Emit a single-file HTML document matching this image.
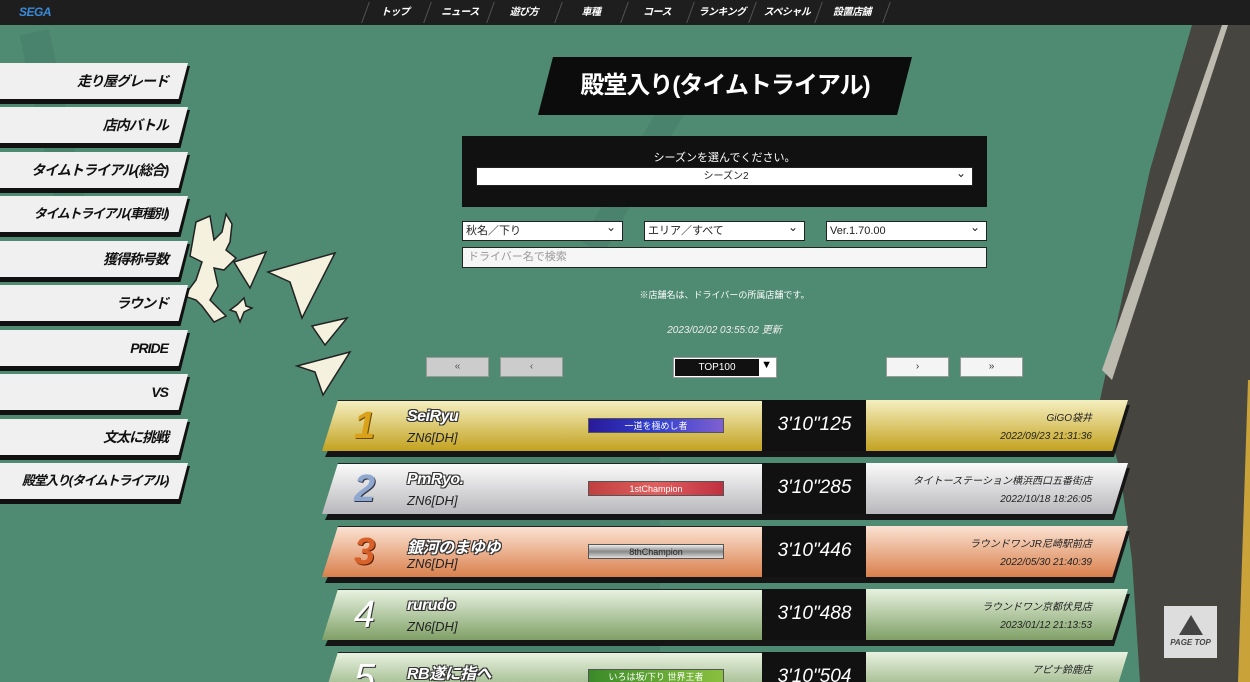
<!DOCTYPE html>
<html style="width:1250px;height:682px;overflow:hidden"><head><meta charset="utf-8">
<style>
*{margin:0;padding:0;box-sizing:border-box}
body{width:1250px;height:682px;overflow:hidden;background:#4f8a73;font-family:"Liberation Sans","Noto Sans CJK JP",sans-serif;position:relative}
.abs{position:absolute}
#nav{left:0;top:0;width:1250px;height:25px;background:#1e1e1e}
.ni{position:absolute;top:0;height:25px;line-height:25px;color:#fff;font-size:10px;font-weight:bold;font-style:italic;text-align:center;letter-spacing:-0.5px}
.sep{position:absolute;top:2px;width:1px;height:21px;background:#555;transform:skewX(-20deg)}
.sb{position:absolute;left:0;width:190px;height:40px}
.sb .sh{position:absolute;left:0;top:3px;width:190px;height:38px;background:#111;clip-path:polygon(0 0,100% 0,95% 100%,0 100%)}
.sb .fc{position:absolute;left:0;top:0;width:188px;height:36px;background:#f0f0f0;clip-path:polygon(0 0,100% 0,95% 100%,0 100%);text-align:right;padding-right:20px;line-height:36px;font-size:14px;font-weight:bold;font-style:italic;color:#111;letter-spacing:-1px;white-space:nowrap}
.sel{position:absolute;height:20px;background:#fff;border:1px solid #222;font-size:11px;line-height:18px;padding-left:3px;color:#222}
.sel:after{content:"⌄";position:absolute;right:6px;top:-4px;font-size:12px}
.btn{position:absolute;top:357px;width:63px;height:20px;border:1px solid #999;font-size:10px;text-align:center;line-height:18px;color:#555}
.row{position:absolute;left:320px;width:810px;height:52px}
.row .shd{position:absolute;left:5px;top:5px;width:805px;height:52px;background:#151515;clip-path:polygon(3% 0,100% 0,98% 100%,0 100%)}
.row .l{position:absolute;left:2px;top:0;width:441px;height:51px;clip-path:polygon(16px 0,100% 0,100% 100%,0 100%);border-top:1px solid #222}
.row .m{position:absolute;left:442px;top:0;width:105px;height:51px;background:#111;color:#fff;font-size:19px;font-style:italic;text-align:center;line-height:50px}
.row .r{position:absolute;left:546px;top:0;width:262px;height:51px;clip-path:polygon(0 0,100% 0,94% 100%,0 100%);text-align:right;padding-right:36px;font-size:10px;font-style:italic;color:#222;padding-top:10px;line-height:18px}
.rk{position:absolute;left:32px;top:3px;font-size:38px;font-weight:bold;font-style:italic;line-height:44px}
.nm{position:absolute;left:85px;top:7px;font-size:16px;font-weight:bold;font-style:italic;color:#fff;letter-spacing:-0.5px;text-shadow:1px 1px 0 #333,-1px -1px 0 #333,1px -1px 0 #333,-1px 1px 0 #333}
.car{position:absolute;left:85px;top:29px;font-size:13px;font-style:italic;color:#222}
.bd{position:absolute;left:266px;top:17px;width:136px;height:15px;font-size:9px;color:#fff;text-align:center;line-height:15px;border:1px solid #555}
</style></head><body>
<svg class="abs" style="left:0;top:0" width="1250" height="682">
<rect x="0" y="25" width="1250" height="657" fill="#4f8a73"/>
<g fill="#467d69" opacity=".6">
<rect x="40" y="30" width="30" height="200" transform="rotate(-12 55 130)"/>
<rect x="630" y="60" width="25" height="200" transform="rotate(30 640 160)"/>
<rect x="360" y="430" width="300" height="250"/>
</g>
<path d="M1192 25 L1250 25 L1250 682 L1140 682 L1132 560 L1120 470 L1100 400 L1150 170 Z" fill="#46453f"/>
<path d="M1222 25 L1228 25 L1112 380 L1102 370 Z" fill="#bdbbb0"/>
<path d="M1248 380 L1250 380 L1250 682 L1238 682 Z" fill="#c9a33a"/>
<g fill="#f4f2de" stroke="#222" stroke-width="1.5">
<path d="M196 222 L210 216 L214 240 L222 232 L226 214 L232 224 L230 242 L226 250 L236 258 L224 270 L214 268 L218 286 L210 300 L226 316 L214 322 L202 306 L196 300 L184 296 L196 280 L202 262 L190 256 Z"/>
<path d="M234 262 L266 252 L250 288 Z"/>
<path d="M268 272 L335 253 L302 318 L290 282 Z"/>
<path d="M312 326 L347 318 L325 345 Z"/>
<path d="M297 366 L350 352 L323 395 L315 372 Z"/>
<path d="M238 304 L244 298 L246 306 L252 308 L244 312 L240 322 L236 312 L230 310 Z"/>
</g>
</svg>
<div id="nav" class="abs">
<div class="abs" style="left:19px;top:5px;color:#3a8ad8;font-weight:bold;font-style:italic;font-size:12px;letter-spacing:-0.5px">SEGA</div>
<div class="sep" style="left:365px"></div><div class="ni" style="left:370px;width:50px">トップ</div>
<div class="sep" style="left:427px"></div><div class="ni" style="left:432px;width:56px">ニュース</div>
<div class="sep" style="left:490px"></div><div class="ni" style="left:495px;width:58px">遊び方</div>
<div class="sep" style="left:558px"></div><div class="ni" style="left:562px;width:58px">車種</div>
<div class="sep" style="left:624px"></div><div class="ni" style="left:629px;width:56px">コース</div>
<div class="sep" style="left:690px"></div><div class="ni" style="left:694px;width:56px">ランキング</div>
<div class="sep" style="left:752px"></div><div class="ni" style="left:756px;width:62px">スペシャル</div>
<div class="sep" style="left:818px"></div><div class="ni" style="left:822px;width:60px">設置店舗</div>
<div class="sep" style="left:886px"></div>
</div>
<div class="sb" style="top:63px"><div class="sh"></div><div class="fc">走り屋グレード</div></div>
<div class="sb" style="top:107px"><div class="sh"></div><div class="fc">店内バトル</div></div>
<div class="sb" style="top:152px"><div class="sh"></div><div class="fc">タイムトライアル(総合)</div></div>
<div class="sb" style="top:196px"><div class="sh"></div><div class="fc" style="font-size:13px;letter-spacing:-1.3px">タイムトライアル(車種別)</div></div>
<div class="sb" style="top:241px"><div class="sh"></div><div class="fc">獲得称号数</div></div>
<div class="sb" style="top:285px"><div class="sh"></div><div class="fc">ラウンド</div></div>
<div class="sb" style="top:330px"><div class="sh"></div><div class="fc">PRIDE</div></div>
<div class="sb" style="top:374px"><div class="sh"></div><div class="fc">VS</div></div>
<div class="sb" style="top:419px"><div class="sh"></div><div class="fc">文太に挑戦</div></div>
<div class="sb" style="top:463px"><div class="sh"></div><div class="fc" style="font-size:13px;letter-spacing:-1.3px">殿堂入り(タイムトライアル)</div></div>

<div class="abs" style="left:538px;top:57px;width:374px;height:58px;background:#0c0c0c;clip-path:polygon(4% 0,100% 0,96% 100%,0 100%);color:#fff;font-size:24px;font-weight:bold;text-align:center;line-height:58px;letter-spacing:-1px">殿堂入り(タイムトライアル)</div>

<div class="abs" style="left:462px;top:136px;width:525px;height:71px;background:#111"></div>
<div class="abs" style="left:462px;top:149px;width:525px;text-align:center;color:#fff;font-size:11px">シーズンを選んでください。</div>
<div class="sel" style="left:476px;top:167px;width:497px;height:19px;text-align:center;font-size:10px">シーズン2</div>
<div class="sel" style="left:462px;top:221px;width:161px">秋名／下り</div>
<div class="sel" style="left:644px;top:221px;width:161px">エリア／すべて</div>
<div class="sel" style="left:826px;top:221px;width:161px">Ver.1.70.00</div>
<div class="abs" style="left:462px;top:247px;width:525px;height:21px;background:#f6f6f6;border:1px solid #222;font-size:11px;color:#999;padding-left:5px;line-height:19px">ドライバー名で検索</div>
<div class="abs" style="left:462px;top:288px;width:525px;text-align:center;color:#fff;font-size:9px">※店舗名は、ドライバーの所属店舗です。</div>
<div class="abs" style="left:462px;top:321px;width:525px;text-align:center;color:#eee;font-size:10px;font-style:italic">2023/02/02 03:55:02 更新</div>
<div class="btn" style="left:426px;background:#ccc">«</div>
<div class="btn" style="left:500px;background:#ccc">‹</div>
<div class="abs" style="left:673px;top:357px;width:104px;height:21px;background:#fff;border:1px solid #999"><div style="position:absolute;left:1px;top:1px;width:84px;height:17px;background:#111;color:#fff;font-size:10px;text-align:center;line-height:17px">TOP100</div><div style="position:absolute;right:4px;top:1px;font-size:11px">▼</div></div>
<div class="btn" style="left:886px;background:#f4f4f4;color:#333">›</div>
<div class="btn" style="left:960px;background:#f4f4f4;color:#333">»</div>

<div class="row" style="top:400px"><div class="shd"></div><div class="l" style="background:linear-gradient(#f5efc0,#c3a21f)"><div class="rk" style="color:#d9a21a;text-shadow:1px 1px 0 #6b4a00">1</div><div class="nm">SeiRyu</div><div class="car">ZN6[DH]</div><div class="bd" style="background:linear-gradient(90deg,#2a1a9a,#3040d0,#8060d0)">一道を極めし者</div></div><div class="m">3'10"125</div><div class="r" style="background:linear-gradient(#f5efc0,#c3a21f)">GiGO袋井<br>2022/09/23 21:31:36</div></div>
<div class="row" style="top:463px"><div class="shd"></div><div class="l" style="background:linear-gradient(#fafafa,#b8b8bc)"><div class="rk" style="color:#8fa8d0;text-shadow:1px 1px 0 #334">2</div><div class="nm">PmRyo.</div><div class="car">ZN6[DH]</div><div class="bd" style="background:linear-gradient(90deg,#c04040,#e06060,#c03040)">1stChampion</div></div><div class="m">3'10"285</div><div class="r" style="background:linear-gradient(#fafafa,#b8b8bc)">タイトーステーション横浜西口五番街店<br>2022/10/18 18:26:05</div></div>
<div class="row" style="top:526px"><div class="shd"></div><div class="l" style="background:linear-gradient(#fbe2d2,#d9804c)"><div class="rk" style="color:#d8602a;text-shadow:1px 1px 0 #602000">3</div><div class="nm">銀河のまゆゆ</div><div class="car">ZN6[DH]</div><div class="bd" style="background:linear-gradient(#eee,#888,#ddd);color:#222">8thChampion</div></div><div class="m">3'10"446</div><div class="r" style="background:linear-gradient(#fbe2d2,#d9804c)">ラウンドワンJR尼崎駅前店<br>2022/05/30 21:40:39</div></div>
<div class="row" style="top:589px"><div class="shd"></div><div class="l" style="background:linear-gradient(#e8f2e0,#7fa066)"><div class="rk" style="color:#fff;font-weight:normal;text-shadow:1px 1px 0 #333">4</div><div class="nm">rurudo</div><div class="car">ZN6[DH]</div></div><div class="m">3'10"488</div><div class="r" style="background:linear-gradient(#e8f2e0,#7fa066)">ラウンドワン京都伏見店<br>2023/01/12 21:13:53</div></div>
<div class="row" style="top:652px;height:30px;overflow:hidden"><div class="l" style="background:linear-gradient(#e8f2e0,#7fa066)"><div class="rk" style="color:#fff;font-weight:normal;text-shadow:1px 1px 0 #333">5</div><div class="nm">RB遂に指へ</div><div class="bd" style="background:linear-gradient(90deg,#3a8a2a,#8ac040);top:16px">いろは坂/下り 世界王者</div></div><div class="m">3'10"504</div><div class="r" style="background:linear-gradient(#e8f2e0,#7fa066)">アピナ鈴鹿店</div></div>

<div class="abs" style="left:1164px;top:606px;width:53px;height:52px;background:#ddd;text-align:center"><div style="margin:9px auto 0;width:0;height:0;border-left:12px solid transparent;border-right:12px solid transparent;border-bottom:20px solid #444"></div><div style="font-size:8px;font-weight:bold;font-style:italic;color:#444;margin-top:3px">PAGE TOP</div></div>
</body></html>
